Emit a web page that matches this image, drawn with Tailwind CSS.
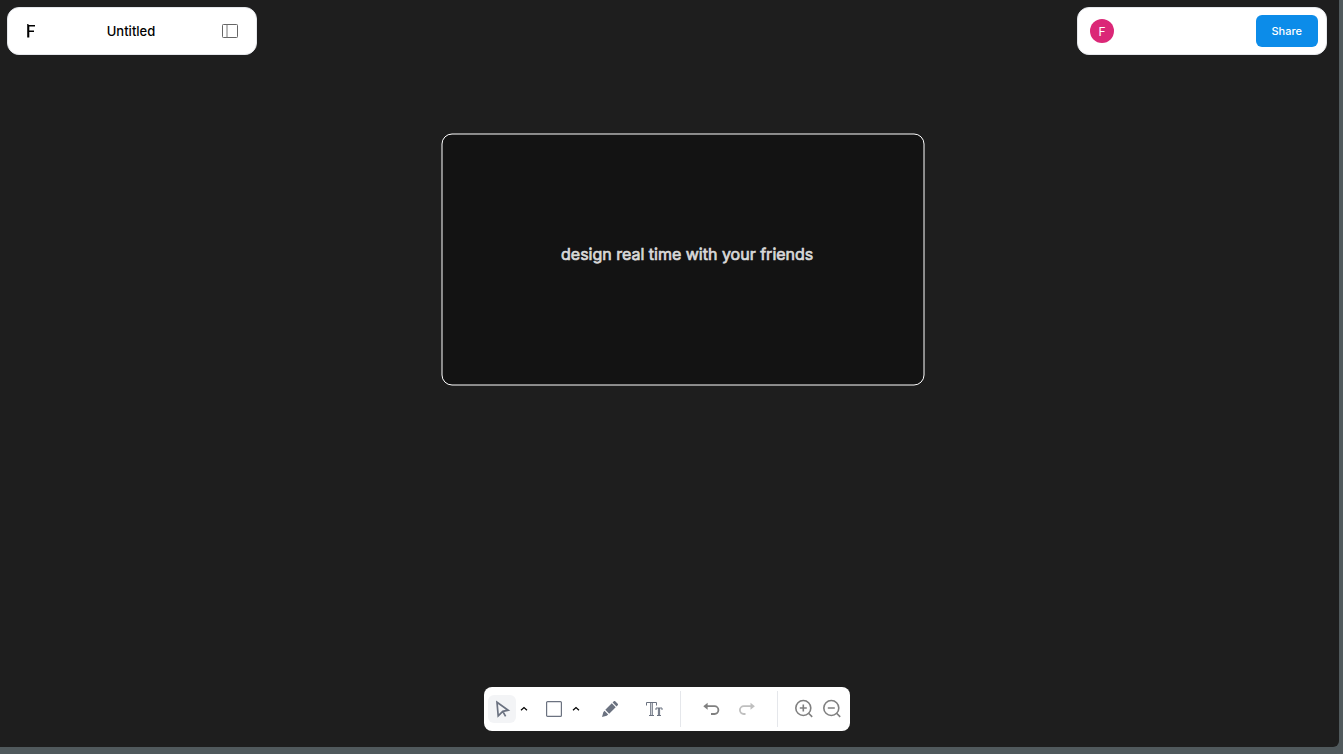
<!DOCTYPE html>
<html lang="en">
<head>
<meta charset="utf-8">
<title>Untitled</title>
<script src="https://cdn.jsdelivr.net/npm/@tailwindcss/browser@4"></script>
</head>
<body class="h-screen overflow-hidden bg-[#50595c] pr-1 pb-[7px] font-['Inter',sans-serif]">
<div class="relative flex h-full flex-col justify-between rounded-br-md bg-[#1e1e1e] pt-[7px] pr-3 pb-4 pl-[7px]">
  <!-- Drawing surface -->
  <svg class="absolute inset-0 h-full w-full" role="img" aria-label="Canvas">
    <rect x="442" y="134" width="482" height="251" rx="10" fill="#131313" stroke="#fff" stroke-width="1"/>
    <text x="561" y="260" font-size="16" font-weight="400" fill="#d9d9d9" stroke="#d9d9d9" stroke-width="0.7">design real time with your friends</text>
  </svg>

  <header class="relative flex items-start justify-between">
    <div class="flex h-12 w-[250px] items-center justify-between rounded-xl border border-gray-200 bg-white px-3">
      <a href="#" aria-label="Home" class="flex h-6 w-[26px] items-center">
        <svg width="24" height="24" viewBox="0 0 24 24" fill="#000"><path d="M7.200 5H8.500v1H15v1.500H9.300v4H14v1.500H9.300V18.500H7.200z"/></svg>
      </a>
      <h1 class="text-[13px] leading-[21px] font-medium text-black">Untitled</h1>
      <button type="button" aria-label="Toggle sidebar" class="flex size-7 items-center justify-center">
        <svg width="16" height="14" viewBox="0 0 16 14" fill="none" stroke="#666"><rect x=".5" y=".5" width="15" height="13" rx=".8"/><path d="M5 .5v13" stroke="#777"/></svg>
      </button>
    </div>
    <div class="flex h-12 w-[250px] items-center justify-between rounded-xl border border-gray-200 bg-white pr-2 pl-3">
      <div class="flex size-6 items-center justify-center rounded-full bg-[#db2777] text-xs leading-[17px] text-white">F</div>
      <button type="button" class="h-8 rounded-md bg-[#0c8ce9] px-4 text-[11px] font-medium text-white">Share</button>
    </div>
  </header>

  <div class="relative flex justify-center">
    <div role="toolbar" aria-label="Tools" class="flex h-11 items-center rounded-lg bg-white px-1 text-[#6b7280]">
      <button type="button" aria-label="Move" class="flex size-7 items-center justify-center rounded-md bg-gray-100">
        <svg width="20" height="20" viewBox="0 0 20 20" fill="none" stroke="currentColor" stroke-width="1.700"><path d="M5 3.200L16.200 11.200 10.800 12.300 6.200 16.800zM10.800 12.300l2.800 5"/></svg>
      </button>
      <button type="button" aria-label="Move options" class="flex h-7 w-4 items-center justify-center text-black">
        <svg width="8" height="6" viewBox="0 0 8 6" fill="none" stroke="currentColor" stroke-width="1.200"><path d="M1 4.300L4 1.500l3 2.800"/></svg>
      </button>
      <button type="button" aria-label="Rectangle" class="ml-2 flex size-7 items-center justify-center">
        <svg width="16" height="16" viewBox="0 0 16 16" fill="none" stroke="currentColor" stroke-width="1.200"><rect x=".6" y=".6" width="14.800" height="14.800" rx="1"/></svg>
      </button>
      <button type="button" aria-label="Shape options" class="flex h-7 w-4 items-center justify-center text-black">
        <svg width="8" height="6" viewBox="0 0 8 6" fill="none" stroke="currentColor" stroke-width="1.200"><path d="M1 4.300L4 1.500l3 2.800"/></svg>
      </button>
      <button type="button" aria-label="Pencil" class="ml-3 flex size-7 items-center justify-center">
        <svg width="16" height="16" viewBox="0 0 16 16" fill="currentColor"><path d="M11.800.3a1 1 0 0 1 1.400 0l2.500 2.500a1 1 0 0 1 0 1.400l-1.200 1.200-3.900-3.900zM9.800 2.300l3.900 3.900-6.500 6.500-3.900-3.900zM2.500 9.800l3.700 3.700-1.500 1.200L0 16l1.300-4.700z"/></svg>
      </button>
      <button type="button" aria-label="Text" class="ml-4 flex size-7 items-center justify-center">
        <svg width="18" height="16" viewBox="0 0 18 16" fill="none" stroke="currentColor"><path d="M1.500 4.500v-3h10v3M5.700 1.500v13M7.300 1.500v13M4 14.500h5M11 9V7h6v2M13.400 7v7.500M14.600 7v7.500M12 14.500h4"/></svg>
      </button>
      <div class="ml-3 h-9 w-px bg-gray-200"></div>
      <button type="button" aria-label="Undo" class="ml-4 flex size-7 items-center justify-center text-[#808080]">
        <svg width="18" height="16" viewBox="0 0 18 16"><path d="M5 5.200H12.500a3.900 3.900 0 0 1 0 7.800h-3.500" fill="none" stroke="currentColor" stroke-width="1.800"/><path d="M1.300 5.200L5.600 1.700v7z" fill="currentColor"/></svg>
      </button>
      <button type="button" aria-label="Redo" disabled class="ml-2 flex size-7 items-center justify-center text-[#bfbfbf]">
        <svg width="18" height="16" viewBox="0 0 18 16"><path d="M13 5.200H5.800a3.900 3.900 0 0 0 0 7.800h1.700" fill="none" stroke="currentColor" stroke-width="1.800"/><path d="M16.900 5.200L12.500 1.700v7z" fill="currentColor"/></svg>
      </button>
      <div class="ml-4 h-9 w-px bg-gray-200"></div>
      <button type="button" aria-label="Zoom in" class="ml-3 flex size-7 items-center justify-center text-[#808080]">
        <svg width="20" height="20" viewBox="0 0 20 20" fill="none" stroke="currentColor" stroke-width="1.600"><circle cx="9.300" cy="9" r="7.500"/><path d="M14.600 14.300l3.600 3.600M5.800 9h7M9.300 5.500v7"/></svg>
      </button>
      <button type="button" aria-label="Zoom out" class="flex size-7 items-center justify-center text-[#808080]">
        <svg width="20" height="20" viewBox="0 0 20 20" fill="none" stroke="currentColor" stroke-width="1.600"><circle cx="9.300" cy="9" r="7.500"/><path d="M14.600 14.300l3.600 3.600M5.800 9h7"/></svg>
      </button>
    </div>
  </div>
</div>
</body>
</html>
